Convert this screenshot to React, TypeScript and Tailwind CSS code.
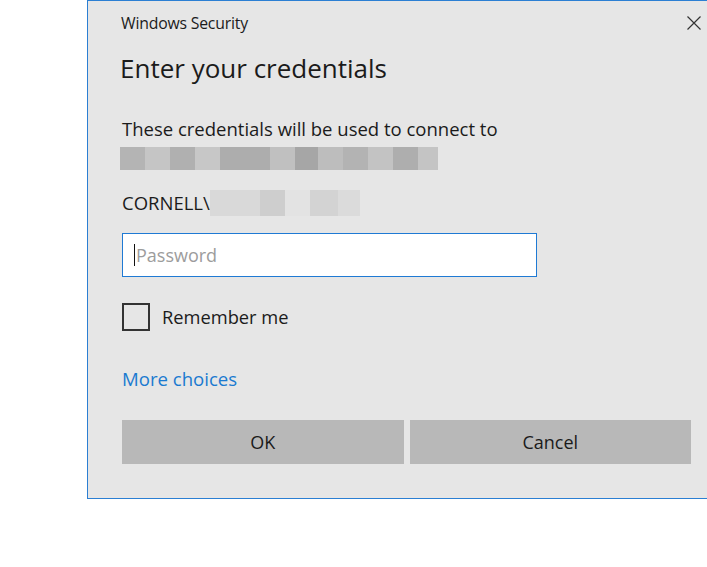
import React from 'react';

const hostBlocks = [
  { w: 25, c: 'bg-[#b4b4b4]' },
  { w: 25, c: 'bg-[#c5c5c5]' },
  { w: 25, c: 'bg-[#b0b0b0]' },
  { w: 25, c: 'bg-[#c7c7c7]' },
  { w: 50, c: 'bg-[#adadad]' },
  { w: 25, c: 'bg-[#c0c0c0]' },
  { w: 23, c: 'bg-[#a6a6a6]' },
  { w: 25, c: 'bg-[#bdbdbd]' },
  { w: 25, c: 'bg-[#b3b3b3]' },
  { w: 25, c: 'bg-[#c3c3c3]' },
  { w: 25, c: 'bg-[#aeaeae]' },
  { w: 20, c: 'bg-[#c4c4c4]' },
];

const userBlocks = [
  { w: 50, c: 'bg-[#d9d9d9]' },
  { w: 25, c: 'bg-[#cecece]' },
  { w: 25, c: 'bg-[#e3e3e3]' },
  { w: 28, c: 'bg-[#d3d3d3]' },
  { w: 22, c: 'bg-[#dbdbdb]' },
];

export default function App() {
  return (
    <div className="min-h-screen w-full overflow-hidden bg-white font-['Open_Sans','Noto_Sans',sans-serif] text-[#1b1b1b]">
      {/* Dialog window, clipped on the right by the viewport */}
      <div className="ml-[87px] w-[640px] h-[499px] border border-[#2b7fd3] bg-[#e6e6e6]">
        {/* Header */}
        <div className="flex items-center justify-between pl-[33px] pr-[24px] pt-[12px]">
          <span className="text-[15.8px] leading-[20px] tracking-[-0.2px]">Windows Security</span>
          <svg width="16" height="16" viewBox="0 0 16 16" className="text-[#333]">
            <path d="M1.5 1.5 L14.5 14.5 M14.5 1.5 L1.5 14.5" stroke="currentColor" strokeWidth="1.2" />
          </svg>
        </div>

        <div className="pl-[34px] pr-[35px]">
          <h1 className="mt-[18px] -ml-[2px] text-[26px] leading-[34px] font-normal">Enter your credentials</h1>

          <p className="mt-[32px] text-[18.5px] leading-[24px]">These credentials will be used to connect to</p>

          {/* blurred host name */}
          <div className="mt-[6px] -ml-[2px] flex h-[23px]">
            {hostBlocks.map((b, i) => (
              <div key={i} className={`h-full ${b.c}`} style={{ width: b.w }} />
            ))}
          </div>

          {/* domain\user */}
          <div className="mt-[20px] flex items-center h-[26px]">
            <span className="text-[18.5px] leading-[24px]">CORNELL\</span>
            <div className="flex h-[26px]">
              {userBlocks.map((b, i) => (
                <div key={i} className={`h-full ${b.c}`} style={{ width: b.w }} />
              ))}
            </div>
          </div>

          {/* password field */}
          <div className="mt-[17px] w-[415px] h-[44px] border border-[#1f7ad4] bg-white flex items-center pl-[11px]">
            <span className="w-px h-[22px] bg-[#111]" />
            <span className="ml-[1px] text-[18px] leading-[24px] text-[#9c9c9c]">Password</span>
          </div>

          {/* remember me */}
          <div className="mt-[26px] flex items-center gap-[12px]">
            <span className="w-[28px] h-[28px] border-2 border-[#333]" />
            <span className="text-[18.3px] leading-[24px]">Remember me</span>
          </div>

          <a className="mt-[36px] block text-[18.6px] leading-[24px] text-[#1a7ad0]">More choices</a>

          {/* buttons */}
          <div className="mt-[29px] grid grid-cols-2 gap-[6px] w-[569px]">
            <button className="h-[44px] bg-[#b8b8b8] text-[18px]">OK</button>
            <button className="h-[44px] bg-[#b8b8b8] text-[18px]">Cancel</button>
          </div>
        </div>
      </div>
    </div>
  );
}
